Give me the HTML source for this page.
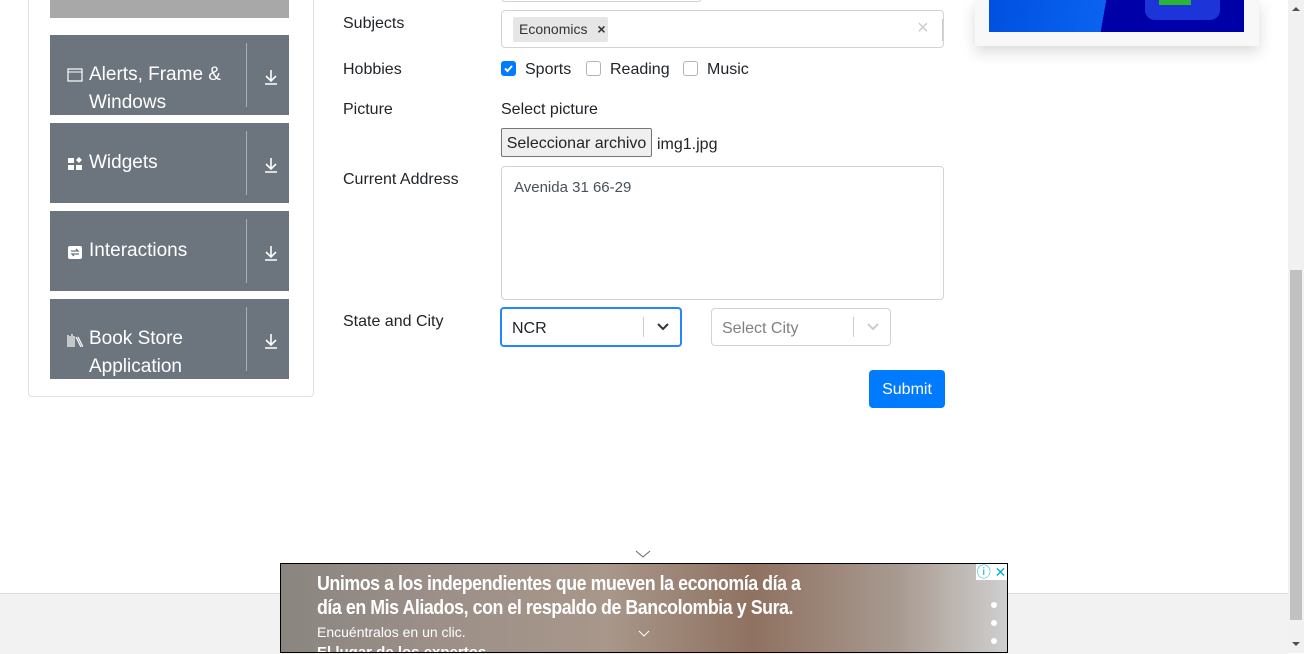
<!DOCTYPE html><html><head><style>
body{margin:0;width:1304px;height:653px;overflow:hidden;position:relative;background:#fff;font-family:"Liberation Sans",sans-serif;color:#212529;font-size:16px}
.a{position:absolute}
.card{left:28px;top:-10px;width:284px;height:405px;border:1px solid #dee2e6;border-radius:4px}
.grp{left:50px;width:239px;height:80px;background:#6c757d;color:#fff;font-size:19px}
.grp .t{position:absolute;left:39px;line-height:28px}
.grp .ic{position:absolute;left:17px;width:16px;height:14px}
.grp .sep{position:absolute;left:196px;top:8px;width:1px;height:64px;background:#aab0b5}
.grp .dl{position:absolute;left:213px;top:33px;width:16px;height:18px}
.lbl{left:343px;font-size:16px}
.box{border:1px solid #ced4da;border-radius:4px;background:#fff}
</style></head><body>
<div class="a card"></div>
<div class="a" style="left:50px;top:0;width:239px;height:18px;background:#a8a8a8"></div>
<div class="a grp" style="top:35px"><svg class="ic" style="top:33px" viewBox="0 0 16 14"><rect x="1" y="1" width="14" height="12" fill="none" stroke="#fff" stroke-width="1.2"/><line x1="1" y1="4" x2="15" y2="4" stroke="#fff"/></svg><div class="t" style="top:26px">Alerts, Frame &amp;<br>Windows</div><div class="sep"></div><svg class="dl" viewBox="0 0 16 18"><path d="M8 2v11M3 8l5 5 5-5M2 16h12" stroke="#fff" stroke-width="1.6" fill="none"/></svg></div>
<div class="a grp" style="top:123px"><svg class="ic" style="top:34px" viewBox="0 0 16 14"><rect x="1" y="1" width="6" height="5" fill="#fff"/><rect x="1" y="8" width="6" height="5" fill="#fff"/><rect x="9" y="8" width="6" height="5" fill="#fff"/><path d="M12 0l3 3-3 3-3-3z" fill="#fff"/></svg><div class="t" style="top:26px">Widgets</div><div class="sep"></div><svg class="dl" viewBox="0 0 16 18"><path d="M8 2v11M3 8l5 5 5-5M2 16h12" stroke="#fff" stroke-width="1.6" fill="none"/></svg></div>
<div class="a grp" style="top:211px"><svg class="ic" style="top:34px" viewBox="0 0 16 14"><rect x="1" y="1" width="14" height="13" rx="2" fill="#fff"/><path d="M4 6h7l-2-2M12 9H5l2 2" stroke="#6c757d" stroke-width="1.3" fill="none"/></svg><div class="t" style="top:26px">Interactions</div><div class="sep"></div><svg class="dl" viewBox="0 0 16 18"><path d="M8 2v11M3 8l5 5 5-5M2 16h12" stroke="#fff" stroke-width="1.6" fill="none"/></svg></div>
<div class="a grp" style="top:299px"><svg class="ic" style="top:34px" viewBox="0 0 16 14"><path d="M1 2v12M3 3v11M5 1v13M7 3v11M9 4l5 10M11 4l5 10" stroke="#fff" stroke-width="1.2"/></svg><div class="t" style="top:26px">Book Store<br>Application</div><div class="sep"></div><svg class="dl" viewBox="0 0 16 18"><path d="M8 2v11M3 8l5 5 5-5M2 16h12" stroke="#fff" stroke-width="1.6" fill="none"/></svg></div>

<div class="a box" style="left:501px;top:-14px;width:199px;height:14px"></div>
<div class="a lbl" style="top:15px">Subjects</div>
<div class="a box" style="left:501px;top:10px;width:441px;height:36px"><div class="a" style="left:11px;top:6px;width:95px;height:25px;background:#e6e6e6;border-radius:2px;font-size:14px;line-height:25px;text-indent:6px;color:#333">Economics <span style="margin-left:6px;font-weight:bold">×</span></div><div class="a" style="left:415px;top:6px;font-size:20px;color:#ccc">×</div><div class="a" style="left:440px;top:8px;width:1px;height:22px;background:#ccc"></div></div>
<div class="a lbl" style="top:61px">Hobbies</div>
<div class="a" style="left:501px;top:61px;width:15px;height:15px;background:#007bff;border-radius:3px"><svg width="15" height="15"><path d="M4 7.5l2.5 2.5L11 5" stroke="#fff" stroke-width="2" fill="none"/></svg></div>
<div class="a" style="left:525px;top:61px">Sports</div>
<div class="a" style="left:586px;top:61px;width:13px;height:13px;border:1px solid #adb5bd;border-radius:3px"></div>
<div class="a" style="left:610px;top:61px">Reading</div>
<div class="a" style="left:683px;top:61px;width:13px;height:13px;border:1px solid #adb5bd;border-radius:3px"></div>
<div class="a" style="left:707px;top:61px">Music</div>
<div class="a lbl" style="top:101px">Picture</div>
<div class="a" style="left:501px;top:101px">Select picture</div>
<div class="a" style="left:501px;top:128px;width:149px;height:27px;background:#efefef;border:1px solid #767676;border-radius:2px;text-align:center;line-height:29px">Seleccionar archivo</div>
<div class="a" style="left:657px;top:136px">img1.jpg</div>
<div class="a lbl" style="top:171px">Current Address</div>
<div class="a box" style="left:501px;top:166px;width:441px;height:132px"><div class="a" style="left:12px;top:12px;font-size:15px;color:#495057">Avenida 31 66-29</div></div>
<div class="a lbl" style="top:313px">State and City</div>
<div class="a" style="left:500px;top:307px;width:178px;height:36px;border:2px solid #2684ff;border-radius:4px;background:#fff"><div class="a" style="left:10px;top:11px;font-size:16px">NCR</div><div class="a" style="left:141px;top:8px;width:1px;height:20px;background:#ccc"></div><svg class="a" style="left:153px;top:11px" width="16" height="14"><path d="M3 4l5 5 5-5" stroke="#333" stroke-width="2" fill="none"/></svg></div>
<div class="a box" style="left:711px;top:308px;width:178px;height:36px"><div class="a" style="left:10px;top:11px;color:#808080">Select City</div><div class="a" style="left:141px;top:8px;width:1px;height:20px;background:#ccc"></div><svg class="a" style="left:153px;top:11px" width="16" height="14"><path d="M3 4l5 5 5-5" stroke="#ccc" stroke-width="2" fill="none"/></svg></div>
<div class="a" style="left:869px;top:370px;width:76px;height:38px;background:#007bff;border-radius:4px;color:#fff;text-align:center;line-height:40px">Submit</div>

<div class="a" style="left:975px;top:0;width:284px;height:46px;background:#f8f8f8;box-shadow:0 6px 14px rgba(0,0,0,.15)"><div class="a" style="left:14px;top:0;width:255px;height:32px;background:linear-gradient(100deg,#0050e0 0,#0a63f0 45%,#0000a8 45%)"><div class="a" style="left:156px;top:0;width:75px;height:20px;background:#1c34d8;border-radius:0 0 10px 10px"></div><div class="a" style="left:170px;top:0;width:32px;height:5px;background:#2cb532"></div></div></div>

<div class="a" style="left:1288px;top:0;width:16px;height:653px;background:#f1f1f1"><div class="a" style="left:2px;top:270px;width:12px;height:350px;background:#c1c1c1"></div><svg class="a" style="left:4px;top:6px" width="8" height="6"><path d="M0 5l4-4 4 4z" fill="#505050"/></svg><svg class="a" style="left:4px;top:641px" width="8" height="6"><path d="M0 1l4 4 4-4z" fill="#505050"/></svg></div>
<div class="a" style="left:0;top:593px;width:1288px;height:60px;background:#f2f2f2;border-top:1px solid #ddd"></div>
<svg class="a" style="left:635px;top:549px" width="16" height="10"><path d="M1 2l7 6 7-6" stroke="#666" fill="none"/></svg>
<div class="a" style="left:280px;top:563px;width:726px;height:88px;border:1px solid #000;background:linear-gradient(90deg,#8a8580 0,#9b8f88 20%,#a8978a 45%,#8f7160 65%,#a89a90 85%,#cfcfcf 100%);overflow:hidden;color:#fff">
<div class="a" style="left:36px;top:8px;font-size:20px;font-weight:bold;line-height:24px;letter-spacing:-.5px;transform:scaleX(.89);transform-origin:0 0;white-space:nowrap">Unimos a los independientes que mueven la economía día a<br>día en Mis Aliados, con el respaldo de Bancolombia y Sura.</div>
<div class="a" style="left:36px;top:60px;font-size:14px">Encuéntralos en un clic.</div>
<div class="a" style="left:36px;top:80px;font-size:15px;font-weight:bold">El lugar de los expertos</div>
<svg class="a" style="left:357px;top:66px" width="12" height="8"><path d="M1 1l5 5 5-5" stroke="#fff" fill="none"/></svg>
<div class="a" style="left:695px;top:0;width:31px;height:16px;background:#fff;color:#00aecd;font-size:14px;line-height:16px;text-align:center">ⓘ ✕</div>
<div class="a" style="left:710px;top:38px;width:6px;height:6px;border-radius:3px;background:#fff"></div>
<div class="a" style="left:710px;top:56px;width:6px;height:6px;border-radius:3px;background:#fff"></div>
<div class="a" style="left:710px;top:74px;width:6px;height:6px;border-radius:3px;background:#fff"></div>
</div>
</body></html>
